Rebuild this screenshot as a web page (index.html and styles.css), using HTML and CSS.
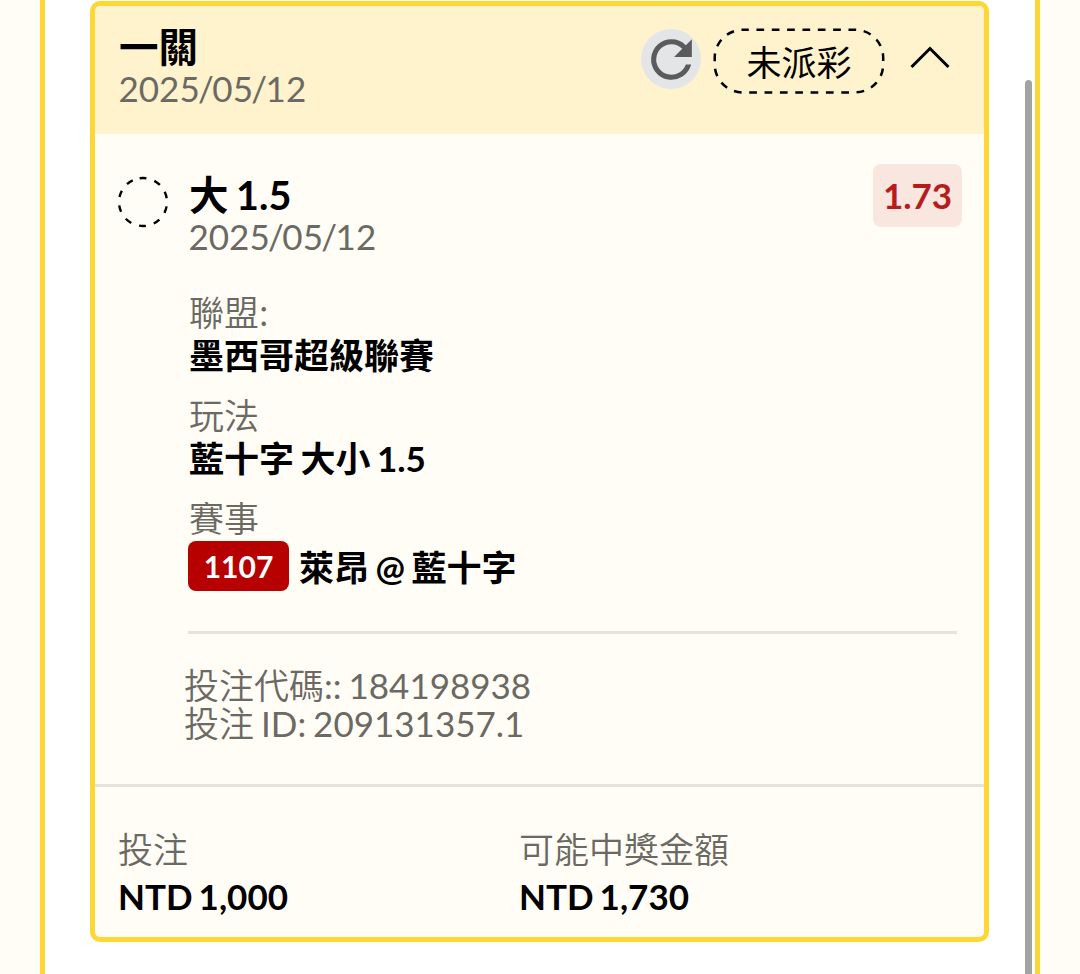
FILE: index.html
```html
<!DOCTYPE html>
<html lang="zh-Hant">
<head>
<meta charset="utf-8" />
<title>投注</title>
<link rel="stylesheet" href="styles.css">
</head>

<body>
<div class="panel">
	<div class="card">
		<div class="header">
			<div class="header-text">
				<div class="title">一關</div>
				<div class="date">2025<span>/</span>05<span>/</span>12</div>
			</div>
			<a class="refresh">
				<svg width="61" height="61" viewBox="0 0 24 24"><path fill="#5a5b5d" d="M17.65 6.35A7.96 7.96 0 0 0 12 4a8 8 0 1 0 7.73 10h-2.08A6 6 0 1 1 12 6c1.66 0 3.14.69 4.22 1.78L13 11h7V4z"/></svg>
			</a>
			<div class="status">
				<svg class="outline" width="172" height="67"><rect x="1.7" y="1.8" width="168.5" height="62.6" rx="28" fill="none" stroke="#000" stroke-width="2.5" stroke-dasharray="7.7 7.64" stroke-dashoffset="1.6"/></svg>
				<span>未派彩</span>
			</div>
			<svg class="arrow" width="42" height="26"><path d="M2.500 22L21 3.5L39.500 22" fill="none" stroke="#000" stroke-width="3"/></svg>
		</div>
		<!-- 注單內容 -->
		<div class="bet">
			<svg class="circle" width="52" height="52"><circle cx="26" cy="26" r="24" transform="rotate(-98 26 26)" fill="none" stroke="#000" stroke-width="2.4" stroke-dasharray="6.8 8.28"/></svg>
			<div class="detail">
				<div class="pick">
					<div>
						<div class="title">大 1.5</div>
						<div class="date">2025<span>/</span>05<span>/</span>12</div>
					</div>
					<div class="odds">1.73</div>
				</div>
				<div class="info">
					<div class="lbl">聯盟:</div>
					<div class="val">墨西哥超級聯賽</div>
				</div>
				<div class="info">
					<div class="lbl">玩法</div>
					<div class="val">藍十字 大小 1.5</div>
				</div>
				<div class="info">
					<div class="lbl">賽事</div>
					<div class="match"><span class="num">1107</span><span class="val">萊昂 @ 藍十字</span></div>
				</div>
				<div class="code">
					<div><span class="zh">投注代碼</span>:: 184198938</div>
					<div><span class="zh">投注</span> ID: 209131357.1</div>
				</div>
			</div>
		</div>
		<div class="footer">
			<div class="sum">
				<div class="lbl">投注</div>
				<div class="val">NTD 1,000</div>
			</div>
			<div class="sum">
				<div class="lbl">可能中獎金額</div>
				<div class="val">NTD 1,730</div>
			</div>
		</div>
	</div>
	<div class="scrollbar"></div>
</div>
</body>
</html>
```
FILE: styles.css
```css
*{
	box-sizing:border-box
	}
body{
	margin:0;
	height:974px;
	overflow:hidden;
	padding:0 40px;
	background:#fffdf5;
	font-family:Lato, "Noto Sans CJK TC", sans-serif;
	font-size:35px;
	line-height:42px;
	word-spacing:-2px;
	color:#000
	}
.panel{
	position:relative;
	height:974px;
	padding:1px 46px 0 45px;
	background:#fff;
	border:solid #fdd835;
	border-width:0 5px
	}
.card{
	height:941px;
	border:5px solid #fdd835;
	border-radius:10px;
	background:#fffdf5;
	overflow:hidden
	}
.header{
	display:flex;
	align-items:flex-start;
	height:128px;
	padding:20px 33px 0 24px;
	background:#fff3cd
	}
.header-text{
	flex:1
	}
.title{
	font-size:39.5px;
	font-weight:bold;
	line-height:41px;
	word-spacing:-2px
	}
.date, .lbl, .code{
	color:#6b6963
	}
.date{
	margin-left:-0.5px
	}
.date span{
	margin:0 -1.6px
	}
.lbl{
	font-family:"Noto Sans CJK TC", sans-serif
	}
.lbl, .zh{
	font-weight:350
	}
.refresh{
	width:60px;
	height:60px;
	margin-top:2.5px;
	border-radius:50%;
	background:#e4e5e7
	}
.refresh svg{
	display:block
	}
.status{
	position:relative;
	width:172px;
	height:67px;
	margin:2px 24.5px 0 12px;
	padding-left:1px;
	line-height:69px;
	text-align:center
	}
.outline{
	position:absolute;
	left:0;
	top:0
	}
.arrow{
	margin-top:19px
	}
.bet{
	display:flex;
	align-items:flex-start;
	height:650px;
	padding:30px 22px 0 21px
	}
.circle{
	margin:12px 19px 0 1px
	}
.detail{
	flex:1
	}
.pick{
	display:flex;
	justify-content:space-between;
	align-items:flex-start;
	height:127px
	}
.pick .title{
	margin:10px 0 0 1px
	}
.pick .date{
	margin-left:0.5px
	}
.odds{
	width:89px;
	height:63px;
	line-height:63px;
	border-radius:8px;
	background:#f8e6df;
	color:#b71c1c;
	font-weight:bold;
	text-align:center
	}
.info{
	padding-left:1px;
	margin-bottom:17px;
	line-height:43px
	}
.info .lbl{
	line-height:39px;
	padding-bottom:4px
	}
.val{
	font-weight:bold
	}
.match{
	display:flex;
	align-items:center;
	height:50px;
	margin:1px 0 0 -1px
	}
.match .val{
	margin-top:3px
	}
.num{
	width:101px;
	height:50px;
	margin-right:10px;
	border-radius:8px;
	background:#b70000;
	color:#fff;
	font-size:30px;
	font-weight:bold;
	line-height:51px;
	text-align:center
	}
.code{
	margin:40px 5px 0 0;
	padding-top:32px;
	border-top:3px solid #e6e2dc;
	line-height:38px
	}
.code div{
	height:38px;
	margin-left:-4px
	}
.footer{
	display:flex;
	height:153px;
	padding:41px 23px 0;
	border-top:3px solid #e6e2dc
	}
.sum{
	width:401px
	}
.sum .lbl{
	line-height:39px;
	padding-bottom:3px
	}
.sum .val{
	margin-top:5px;
	word-spacing:-2.5px
	}
.scrollbar{
	position:absolute;
	right:3px;
	top:80px;
	width:7px;
	height:910px;
	border-radius:4px;
	background:#a3a3a3
	}
```
